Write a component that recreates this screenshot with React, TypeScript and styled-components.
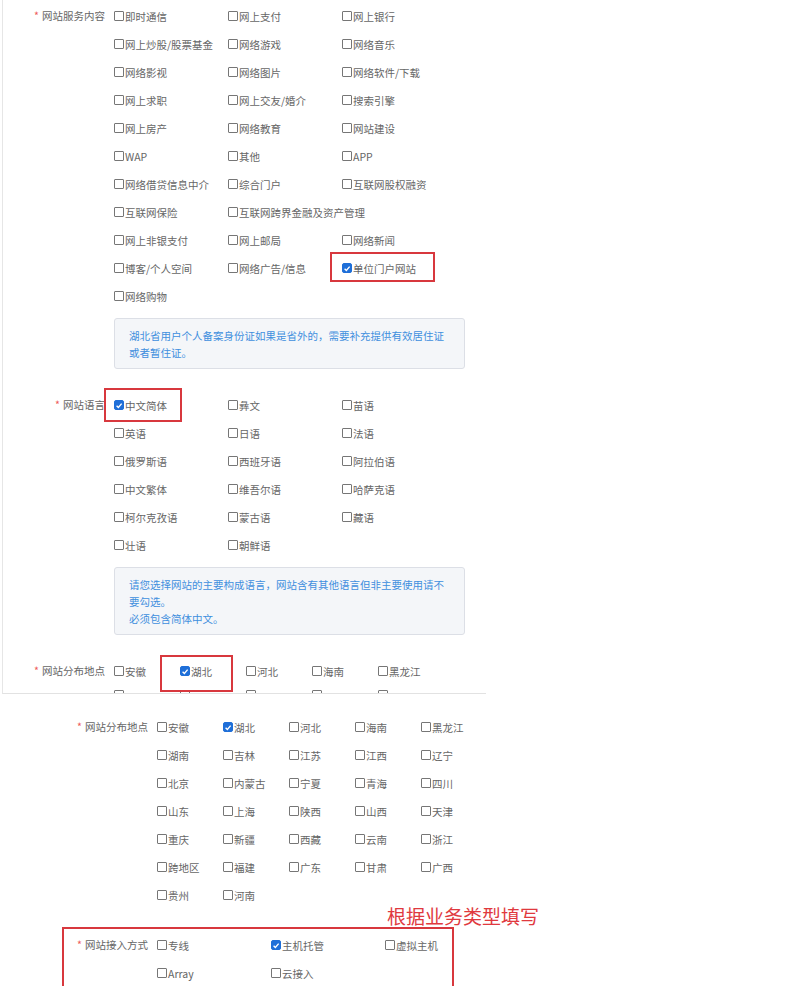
import styled, { createGlobalStyle, css } from "styled-components";

type Opt = { text: string; checked?: boolean; mark?: string; span?: number };

const serviceOptions: Opt[] = [
  { text: "即时通信" },
  { text: "网上支付" },
  { text: "网上银行" },
  { text: "网上炒股/股票基金" },
  { text: "网络游戏" },
  { text: "网络音乐" },
  { text: "网络影视" },
  { text: "网络图片" },
  { text: "网络软件/下载" },
  { text: "网上求职" },
  { text: "网上交友/婚介" },
  { text: "搜索引擎" },
  { text: "网上房产" },
  { text: "网络教育" },
  { text: "网站建设" },
  { text: "WAP" },
  { text: "其他" },
  { text: "APP" },
  { text: "网络借贷信息中介" },
  { text: "综合门户" },
  { text: "互联网股权融资" },
  { text: "互联网保险" },
  { text: "互联网跨界金融及资产管理", span: 2 },
  { text: "网上非银支付" },
  { text: "网上邮局" },
  { text: "网络新闻" },
  { text: "博客/个人空间" },
  { text: "网络广告/信息" },
  { text: "单位门户网站", checked: true, mark: "-2px -19px 0px -12px" },
  { text: "网络购物" },
];

const languageOptions: Opt[] = [
  { text: "中文简体", checked: true, mark: "-3px -15px -3px -10px" },
  { text: "彝文" },
  { text: "苗语" },
  { text: "英语" },
  { text: "日语" },
  { text: "法语" },
  { text: "俄罗斯语" },
  { text: "西班牙语" },
  { text: "阿拉伯语" },
  { text: "中文繁体" },
  { text: "维吾尔语" },
  { text: "哈萨克语" },
  { text: "柯尔克孜语" },
  { text: "蒙古语" },
  { text: "藏语" },
  { text: "壮语" },
  { text: "朝鲜语" },
];

const provinces = [
  "安徽", "湖北", "河北", "海南", "黑龙江",
  "湖南", "吉林", "江苏", "江西", "辽宁",
  "北京", "内蒙古", "宁夏", "青海", "四川",
  "山东", "上海", "陕西", "山西", "天津",
  "重庆", "新疆", "西藏", "云南", "浙江",
  "跨地区", "福建", "广东", "甘肃", "广西",
  "贵州", "河南",
];

const accessOptions: Opt[] = [
  { text: "专线" },
  { text: "主机托管", checked: true },
  { text: "虚拟主机" },
  { text: "Array" },
  { text: "云接入" },
];

function CheckList({ items, cols, colWidth }: { items: Opt[]; cols: number; colWidth: number }) {
  return (
    <StGrid $cols={cols} $colWidth={colWidth}>
      {items.map((item) => (
        <StOption key={item.text} $span={item.span} $mark={item.mark}>
          <StBox $checked={item.checked}>
            {item.checked && (
              <svg width="9" height="9" viewBox="0 0 10 10">
                <path d="M2 5.2 L4.2 7.4 L8.3 2.6" fill="none" stroke="#fff" strokeWidth="1.7" />
              </svg>
            )}
          </StBox>
          {item.text}
        </StOption>
      ))}
    </StGrid>
  );
}

function App() {
  const topProvinces: Opt[] = provinces.slice(0, 5).map((p) => ({
    text: p,
    checked: p === "湖北",
    mark: p === "湖北" ? "-2px -21px -7px -20px" : undefined,
  }));
  const allProvinces: Opt[] = provinces.map((p) => ({ text: p, checked: p === "湖北" }));

  return (
    <>
      <GlobalStyle />
      <StTopPanel>
        <StFormRow>
          <StLabel $width={111}>
            <StStar>*</StStar>网站服务内容
          </StLabel>
          <StField>
            <CheckList items={serviceOptions} cols={3} colWidth={114} />
            <StInfo>
              <span>湖北省用户个人备案身份证如果是省外的，需要补充提供有效居住证</span>
              <span>或者暂住证。</span>
            </StInfo>
          </StField>
        </StFormRow>

        <StFormRow>
          <StLabel $width={111}>
            <StStar>*</StStar>网站语言
          </StLabel>
          <StField>
            <CheckList items={languageOptions} cols={3} colWidth={114} />
            <StInfo>
              <span>请您选择网站的主要构成语言，网站含有其他语言但非主要使用请不</span>
              <span>要勾选。</span>
              <span>必须包含简体中文。</span>
            </StInfo>
          </StField>
        </StFormRow>

        <StFormRow>
          <StLabel $width={111}>
            <StStar>*</StStar>网站分布地点
          </StLabel>
          <StField>
            <CheckList items={topProvinces} cols={5} colWidth={66} />
            {/* tops of the next row of boxes, cut off by the screenshot edge */}
            <StPeek>
              {provinces.slice(5, 10).map((p) => (
                <StBox key={p} />
              ))}
            </StPeek>
          </StField>
        </StFormRow>
      </StTopPanel>

      <StBottomPanel>
        <StFormRow>
          <StLabel $width={157}>
            <StStar>*</StStar>网站分布地点
          </StLabel>
          <StField>
            <CheckList items={allProvinces} cols={5} colWidth={66} />
          </StField>
        </StFormRow>

        <StNote>根据业务类型填写</StNote>

        <StHighlight>
          <StFormRow>
            <StLabel $width={93}>
              <StStar>*</StStar>网站接入方式
            </StLabel>
            <StField>
              <CheckList items={accessOptions} cols={3} colWidth={114} />
            </StField>
          </StFormRow>
        </StHighlight>
      </StBottomPanel>
    </>
  );
}

export default App;

const GlobalStyle = createGlobalStyle`
  html, body {
    margin: 0;
    padding: 0;
    background: #ffffff;
  }

  body {
    font-family: "Noto Sans CJK SC", "Microsoft YaHei", sans-serif;
    font-size: 10.5px;
    color: #666666;
  }
`;

const StTopPanel = styled.div`
  box-sizing: border-box;
  width: 484px;
  height: 694px;
  margin-left: 2px;
  padding-top: 2px;
  overflow: hidden;

  border-left: 1px solid #e6e6e6;
  border-bottom: 1px solid #e2e2e2;

  > div {
    margin-bottom: 22px;
  }
`;

const StBottomPanel = styled.div`
  padding-top: 19px;
`;

const StFormRow = styled.div`
  display: flex;
  align-items: flex-start;
`;

const StLabel = styled.div<{ $width: number }>`
  box-sizing: border-box;
  flex-shrink: 0;
  width: ${(p) => p.$width}px;
  height: 28px;
  padding-right: 9px;

  line-height: 28px;
  text-align: right;
  white-space: nowrap;
  color: #666666;
`;

const StStar = styled.span`
  margin-right: 3px;
  color: #ee5a5a;
`;

const StField = styled.div`
  display: flex;
  flex-direction: column;
`;

const StGrid = styled.div<{ $cols: number; $colWidth: number }>`
  display: grid;
  grid-template-columns: repeat(${(p) => p.$cols}, ${(p) => p.$colWidth}px);
  grid-auto-rows: 28px;
`;

const StPeek = styled.div`
  display: grid;
  grid-template-columns: repeat(5, 66px);
  margin-top: 5px;
`;

const StOption = styled.label<{ $span?: number; $mark?: string }>`
  position: relative;
  display: flex;
  align-items: center;
  justify-self: start;
  grid-column: span ${(p) => p.$span ?? 1};

  white-space: nowrap;
  color: #666666;

  ${(p) =>
    p.$mark &&
    css`
      &::after {
        content: "";
        position: absolute;
        inset: ${p.$mark};
        border: 2px solid #d8383e;
        pointer-events: none;
      }
    `}
`;

const StBox = styled.span<{ $checked?: boolean }>`
  box-sizing: border-box;
  display: inline-flex;
  align-items: center;
  justify-content: center;
  width: 10px;
  height: 10px;
  margin-right: 1px;

  border: 1px solid ${(p) => (p.$checked ? "#1f6fd8" : "#767676")};
  border-radius: ${(p) => (p.$checked ? "2px" : "1px")};
  background-color: ${(p) => (p.$checked ? "#1f6fd8" : "#ffffff")};
`;

const StInfo = styled.div`
  box-sizing: border-box;
  display: flex;
  flex-direction: column;
  width: 351px;
  margin-top: 8px;
  padding: 8px 10px 7px 14px;

  background-color: #f4f6f9;
  border: 1px solid #dcdfe6;
  border-radius: 3px;

  color: #3f8fde;
  line-height: 17px;
  white-space: nowrap;
`;

const StNote = styled.div`
  height: 20px;
  margin-top: -3px;
  margin-left: 387px;

  font-size: 19px;
  line-height: 20px;
  color: #e0393e;
  white-space: nowrap;
`;

const StHighlight = styled.div`
  box-sizing: border-box;
  width: 392px;
  margin-top: 1px;
  margin-left: 62px;
  padding: 2px 0 12px;

  border: 2px solid #d8383e;
`;
